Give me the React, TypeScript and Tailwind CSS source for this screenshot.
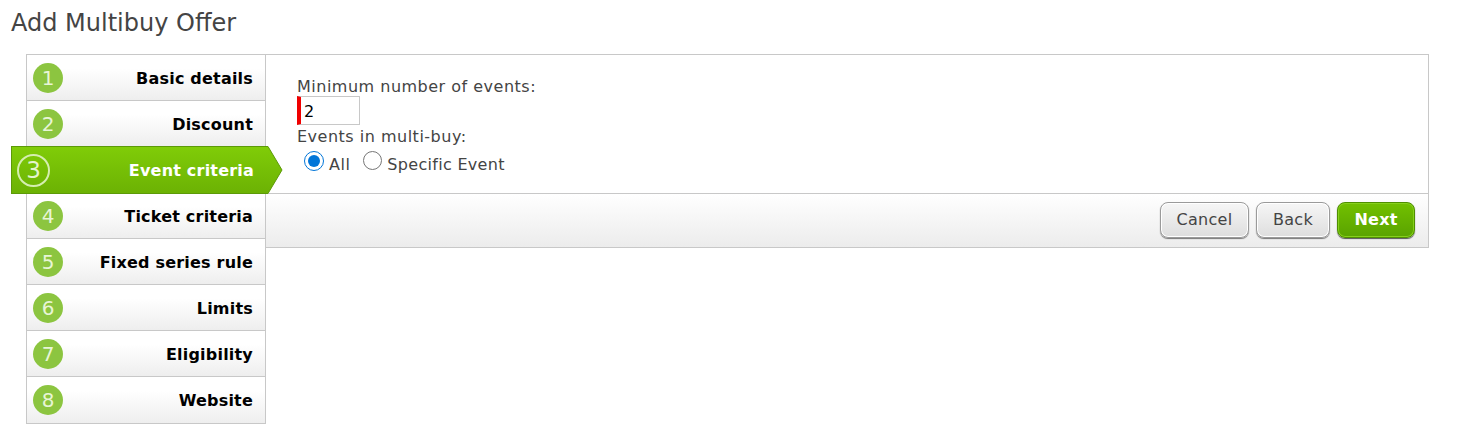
const font = { fontFamily: '"DejaVu Sans", Verdana, sans-serif' };
const steps = ["Basic details", "Discount", "Event criteria", "Ticket criteria", "Fixed series rule", "Limits", "Eligibility", "Website"];

function Step({ n, label }: { n: number; label: string }) {
  if (n === 3) {
    return (
      <div className="relative -ml-[16px] -mr-[1px] -mt-px -mb-px h-[48px] flex items-center bg-gradient-to-b from-[#80cc08] to-[#6cb204] border border-[#5c9a08] border-r-0 z-10">
        <div className="ml-[5px] w-[33px] h-[33px] rounded-full border-2 border-[#d5eeb0] flex items-center justify-center text-[23px] font-normal text-[#e4f4cc]">3</div>
        <span className="ml-auto mr-[12px] pt-[1px] text-[16px] tracking-[0.2px] font-bold text-white">{label}</span>
        <svg className="absolute left-full -top-px" width="17" height="48" viewBox="0 0 17 48">
          <defs>
            <linearGradient id="ag" x1="0" y1="0" x2="0" y2="1">
              <stop offset="0" stopColor="#80cc08" />
              <stop offset="1" stopColor="#6cb204" />
            </linearGradient>
          </defs>
          <path d="M0 .5 L2 .5 L16 24 L2 47.5 L0 47.5 Z" fill="url(#ag)" stroke="#5c9a08" strokeWidth="1" />
          <rect x="0" y="1" width="1.5" height="46" fill="url(#ag)" />
        </svg>
      </div>
    );
  }
  return (
    <div className="h-[46px] flex items-center border-b border-[#c8c8c8] last:border-b-0 bg-gradient-to-b from-white from-30% to-[#eeeeee]">
      <div className="ml-[6px] w-[30px] h-[30px] rounded-full bg-[#8cc540] flex items-center justify-center text-[20px] text-[#e8f5d6]">{n}</div>
      <span className="ml-auto mr-[12px] pt-[3px] last:pt-[2px] text-[16px] tracking-[0.2px] font-bold text-black">{label}</span>
    </div>
  );
}

export default function App() {
  return (
    <div className="h-[441px] bg-white overflow-hidden" style={font}>
      <h1 className="pl-[11px] pt-[9px] h-[54px] text-[24px] leading-[28px] font-normal text-[#444444]">Add Multibuy Offer</h1>
      <div className="flex ml-[26px] w-[1403px] items-start">
        <div className="w-[240px] h-[370px] border border-[#c8c8c8] shrink-0">
          {steps.map((s, i) => (
            <Step key={s} n={i + 1} label={s} />
          ))}
        </div>
        <div className="flex-1 h-[194px] border border-l-0 border-[#c8c8c8] flex flex-col">
          <div className="h-[139px] pl-[31px] pt-[21px] text-[16px] tracking-[0.5px] text-[#444444] border-b border-[#c8c8c8]">
            <div className="leading-[20px] pt-[1px] h-[20px]">Minimum number of events:</div>
            <div className="w-[63px] h-[29px] border border-[#c8c8c8] border-l-[4px] border-l-[#f00000] pl-[3px] pt-[1px] text-black leading-[28px]">2</div>
            <div className="leading-[22px] pt-[1px] h-[22px]">Events in multi-buy:</div>
            <div className="flex items-start h-[28px] pl-[7px]">
              <input type="radio" name="ev" defaultChecked className="w-[20px] h-[20px] mt-[4px] accent-[#0075d8]" />
              <span className="ml-[5px] mt-[8px] leading-[20px]">All</span>
              <input type="radio" name="ev" className="ml-[13px] w-[19px] h-[19px] mt-[4px]" />
              <span className="ml-[5px] mt-[8px] leading-[20px] tracking-[0.3px]">Specific Event</span>
            </div>
          </div>
          <div className="flex-1 flex items-start pt-[8px] justify-end gap-[7px] pr-[13px] bg-gradient-to-b from-white to-[#ececec]">
            <button className="w-[89px] h-[36px] rounded-[8px] border border-[#9a9a9a] shadow-[0_1px_1px_#777,inset_0_0_0_1px_#ffffff] bg-gradient-to-b from-[#f6f6f6] to-[#dedede] text-[16px] tracking-[0.3px] text-[#444444]">Cancel</button>
            <button className="w-[74px] h-[36px] rounded-[8px] border border-[#9a9a9a] shadow-[0_1px_1px_#777,inset_0_0_0_1px_#ffffff] bg-gradient-to-b from-[#f6f6f6] to-[#dedede] text-[16px] tracking-[0.3px] text-[#444444]">Back</button>
            <button className="w-[78px] h-[36px] rounded-[8px] border border-[#4f8f00] shadow-[0_1px_1px_#555,inset_0_0_0_1px_#86d01c] bg-gradient-to-b from-[#72c000] to-[#5aa300] text-[16px] tracking-[0.2px] font-bold text-white">Next</button>
          </div>
        </div>
      </div>
    </div>
  );
}
